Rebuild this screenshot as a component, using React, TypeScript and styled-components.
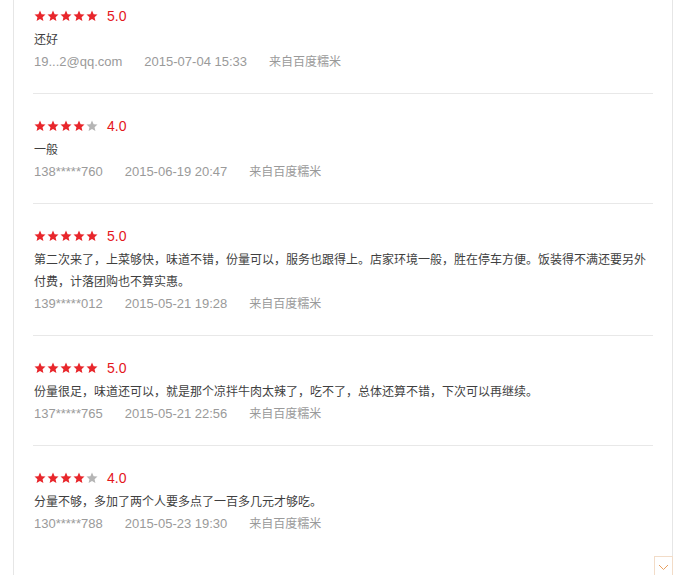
import React from "react";
import styled, { createGlobalStyle } from "styled-components";

const GlobalStyle = createGlobalStyle`
  html, body {
    margin: 0;
    padding: 0;
    background: #ffffff;
  }
  body {
    font-family: "Liberation Sans", "Noto Sans CJK SC", sans-serif;
    overflow: hidden;
  }
`;

const Page = styled.div`
  padding: 0 15px 0 13px;
  height: 575px;
  box-sizing: border-box;
`;

const Panel = styled.div`
  width: 660px;
  height: 100%;
  box-sizing: border-box;
  border-left: 1px solid #e6e6e6;
  border-right: 1px solid #e6e6e6;
  padding: 0 19px 0 19px;
`;

const List = styled.ul`
  list-style: none;
  margin: 0;
  padding: 0;
`;

const Item = styled.li<{ $first?: boolean }>`
  padding: ${(p) => (p.$first ? "6px" : "22px")} 0 20px 1px;
  border-bottom: 1px solid #e8e8e8;

  &:last-child {
    border-bottom: none;
  }
`;

const RatingRow = styled.div`
  display: flex;
  align-items: center;
  height: 20px;
  margin-bottom: 3px;
`;

const Stars = styled.span`
  display: flex;
  gap: 1px;
  margin-right: 9px;
`;

const StarIcon = styled.svg<{ $on: boolean }>`
  width: 12px;
  height: 12px;
  display: block;
  fill: ${(p) => (p.$on ? "#e8262b" : "#b5b5b5")};
`;

const Score = styled.span`
  font-size: 14px;
  color: #e4161c;
  line-height: 20px;
`;

const Comment = styled.p`
  margin: 0;
  font-size: 12px;
  line-height: 22px;
  color: #3f3f3f;
  max-width: 620px;
`;

const Meta = styled.div`
  display: flex;
  gap: 22px;
  font-size: 13px;
  line-height: 22px;
  color: #9a9a9a;
`;

const Source = styled.span`
  font-size: 12px;
`;

const ScrollButton = styled.button`
  position: fixed;
  right: 15px;
  bottom: -3px;
  width: 19px;
  height: 22px;
  padding: 0;
  border: 1px solid #f2dcc8;
  background: #ffffff;
  display: flex;
  align-items: center;
  justify-content: center;
  cursor: pointer;
`;

const Star = ({ on }: { on: boolean }) => (
  <StarIcon $on={on} viewBox="0 0 24 24">
    <polygon points="12,1 15.2,8.3 23,9.1 17.1,14.3 18.8,22 12,18 5.2,22 6.9,14.3 1,9.1 8.8,8.3" />
  </StarIcon>
);

type Review = {
  score: number;
  text: string;
  user: string;
  time: string;
};

const reviews: Review[] = [
  { score: 5, text: "还好", user: "19...2@qq.com", time: "2015-07-04 15:33" },
  { score: 4, text: "一般", user: "138*****760", time: "2015-06-19 20:47" },
  {
    score: 5,
    text: "第二次来了，上菜够快，味道不错，份量可以，服务也跟得上。店家环境一般，胜在停车方便。饭装得不满还要另外付费，计落团购也不算实惠。",
    user: "139*****012",
    time: "2015-05-21 19:28",
  },
  {
    score: 5,
    text: "份量很足，味道还可以，就是那个凉拌牛肉太辣了，吃不了，总体还算不错，下次可以再继续。",
    user: "137*****765",
    time: "2015-05-21 22:56",
  },
  {
    score: 4,
    text: "分量不够，多加了两个人要多点了一百多几元才够吃。",
    user: "130*****788",
    time: "2015-05-23 19:30",
  },
];

export default function App() {
  return (
    <>
      <GlobalStyle />
      <Page>
        <Panel>
          <List>
            {reviews.map((r, i) => (
              <Item key={i} $first={i === 0}>
                <RatingRow>
                  <Stars>
                    {[0, 1, 2, 3, 4].map((s) => (
                      <Star key={s} on={s < r.score} />
                    ))}
                  </Stars>
                  <Score>{r.score.toFixed(1)}</Score>
                </RatingRow>
                <Comment>{r.text}</Comment>
                <Meta>
                  <span>{r.user}</span>
                  <span>{r.time}</span>
                  <Source>来自百度糯米</Source>
                </Meta>
              </Item>
            ))}
          </List>
        </Panel>
      </Page>
      <ScrollButton aria-label="向下">
        <svg width="11" height="7" viewBox="0 0 11 7">
          <polyline points="1,1 5.5,5.5 10,1" fill="none" stroke="#e8a060" strokeWidth="1" />
        </svg>
      </ScrollButton>
    </>
  );
}
